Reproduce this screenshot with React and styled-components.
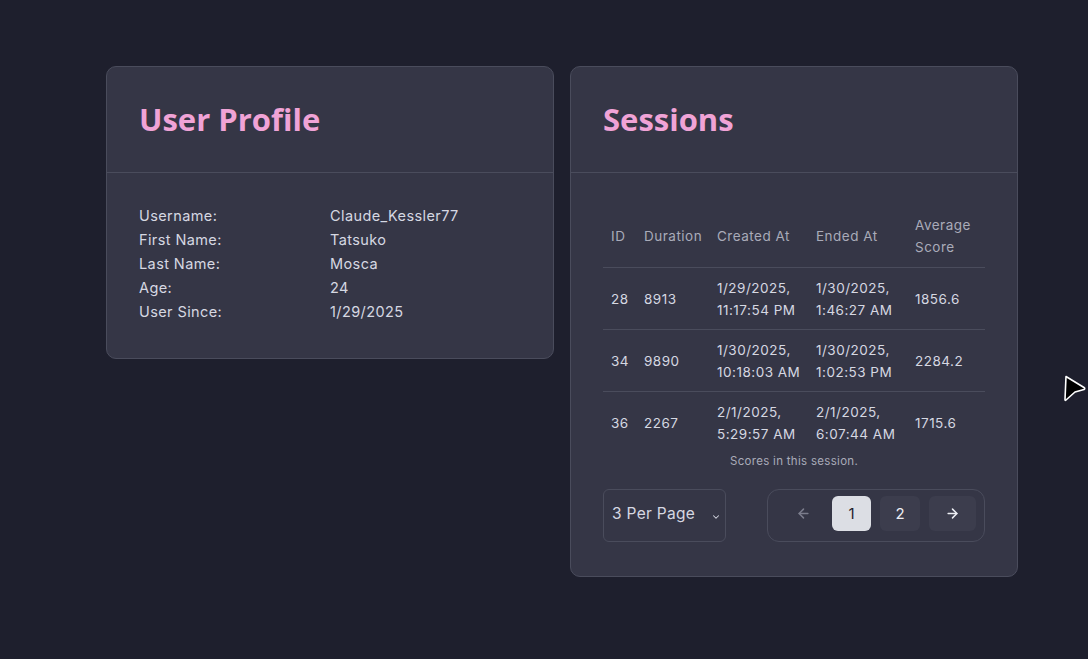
import React from "react";
import styled, { createGlobalStyle } from "styled-components";

// Palette
const pageBg = "#1e1f2d";
const cardBg = "#353646";
const lineColor = "#4a4c5c";
const pink = "#f0a3d6";
const textColor = "#d6d8e2";
const mutedText = "#a9abb9";

const GlobalStyle = createGlobalStyle`
  html, body {
    margin: 0;
    padding: 0;
    background: ${pageBg};
  }
  body {
    font-family: "Inter", "Liberation Sans", sans-serif;
    color: ${textColor};
  }
`;

const Page = styled.main`
  position: relative;
  min-height: 659px;
  box-sizing: border-box;
  padding: 66px 0 0 106px;
  display: flex;
  align-items: flex-start;
  gap: 16px;
`;

const Card = styled.section`
  width: 448px;
  box-sizing: border-box;
  background: ${cardBg};
  border: 1px solid ${lineColor};
  border-radius: 10px;
  overflow: hidden;
`;

const CardHeader = styled.header`
  height: 106px;
  box-sizing: border-box;
  padding: 33px 32px 0;
  border-bottom: 1px solid ${lineColor};
`;

const Title = styled.h2`
  margin: 0;
  font-family: "Open Sans", "Noto Sans", sans-serif;
  font-weight: 700;
  font-size: 31px;
  line-height: 38px;
  color: ${pink};
`;

const CardBody = styled.div`
  padding: ${({ $pad }) => $pad || "31px 32px 34px"};
`;

const InfoGrid = styled.dl`
  margin: 0;
  display: grid;
  grid-template-columns: 191px 1fr;
  font-size: 14.5px;
  letter-spacing: 0.4px;
  line-height: 24px;

  dt,
  dd {
    margin: 0;
    color: ${textColor};
  }
`;

const Table = styled.table`
  width: 100%;
  table-layout: fixed;
  border-collapse: collapse;
  font-size: 13.5px;
  letter-spacing: 0.5px;
  line-height: 22px;

  caption {
    caption-side: bottom;
    font-size: 11.5px;
    letter-spacing: 0.3px;
    color: ${mutedText};
    padding-top: 2px;
    line-height: 12px;
  }
`;

const Th = styled.th`
  text-align: left;
  font-weight: 400;
  color: ${mutedText};
  padding: 9px 8px;
  border-bottom: 1px solid ${lineColor};
  width: ${({ $w }) => $w || "auto"};
  vertical-align: middle;
`;

const Td = styled.td`
  padding: 9px 8px 8px;
  color: ${textColor};
  border-bottom: ${({ $last }) => ($last ? "none" : `1px solid ${lineColor}`)};
  vertical-align: middle;
  white-space: nowrap;
`;

const Controls = styled.div`
  display: flex;
  justify-content: space-between;
  align-items: center;
  margin-top: 22px;
`;

const SelectBox = styled.div`
  width: 123px;
  height: 53px;
  box-sizing: border-box;
  border: 1px solid ${lineColor};
  border-radius: 6px;
  display: flex;
  align-items: center;
  justify-content: space-between;
  padding: 0 4px 4px 8px;
  font-size: 15.5px;
  letter-spacing: 0.3px;
  color: ${textColor};
`;

const Pager = styled.nav`
  width: 218px;
  height: 53px;
  box-sizing: border-box;
  border: 1px solid ${lineColor};
  border-radius: 12px;
  display: flex;
  align-items: center;
  padding: 0 8px 0 16px;
  gap: 9px;
`;

const PageButton = styled.button`
  height: 35px;
  width: ${({ $w }) => $w || "39px"};
  border: none;
  border-radius: 6px;
  margin-top: -4px;
  display: flex;
  align-items: center;
  justify-content: center;
  font-family: inherit;
  font-size: 15px;
  padding: 0;
  background: ${({ $active, $ghost }) =>
    $active ? "#dcdee4" : $ghost ? "transparent" : "#3c3d4d"};
  color: ${({ $active, $disabled }) =>
    $active ? "#1e1f2d" : $disabled ? "#7b7d8c" : "#eceef4"};
`;

const Cursor = styled.svg`
  position: absolute;
  left: 1062px;
  top: 373px;
`;

const profile = [
  ["Username:", "Claude_Kessler77"],
  ["First Name:", "Tatsuko"],
  ["Last Name:", "Mosca"],
  ["Age:", "24"],
  ["User Since:", "1/29/2025"],
];

const sessions = [
  { id: 28, duration: 8913, created: ["1/29/2025,", "11:17:54 PM"], ended: ["1/30/2025,", "1:46:27 AM"], avg: "1856.6" },
  { id: 34, duration: 9890, created: ["1/30/2025,", "10:18:03 AM"], ended: ["1/30/2025,", "1:02:53 PM"], avg: "2284.2" },
  { id: 36, duration: 2267, created: ["2/1/2025,", "5:29:57 AM"], ended: ["2/1/2025,", "6:07:44 AM"], avg: "1715.6" },
];

const Arrow = ({ dir }) => (
  <svg width="15" height="15" viewBox="0 0 24 24" fill="none" stroke="currentColor" strokeWidth="2.4" strokeLinecap="round" strokeLinejoin="round">
    {dir === "left" ? (
      <>
        <path d="M19 12H5" />
        <path d="M12 19l-7-7 7-7" />
      </>
    ) : (
      <>
        <path d="M5 12h14" />
        <path d="M12 5l7 7-7 7" />
      </>
    )}
  </svg>
);

const App = () => {
  const lastIndex = sessions.length - 1;
  return (
    <>
      <GlobalStyle />
      <Page>
        <Card>
          <CardHeader>
            <Title>User Profile</Title>
          </CardHeader>
          <CardBody>
            <InfoGrid>
              {profile.map(([label, value]) => (
                <React.Fragment key={label}>
                  <dt>{label}</dt>
                  <dd>{value}</dd>
                </React.Fragment>
              ))}
            </InfoGrid>
          </CardBody>
        </Card>

        <Card>
          <CardHeader>
            <Title>Sessions</Title>
          </CardHeader>
          <CardBody $pad="32px 32px 34px">
            <Table>
              <caption>Scores in this session.</caption>
              <thead>
                <tr>
                  <Th $w="17px">ID</Th>
                  <Th $w="57px">Duration</Th>
                  <Th $w="83px">Created At</Th>
                  <Th $w="83px">Ended At</Th>
                  <Th>Average<br />Score</Th>
                </tr>
              </thead>
              <tbody>
                {sessions.map((s, i) => (
                  <tr key={s.id}>
                    <Td $last={i === lastIndex}>{s.id}</Td>
                    <Td $last={i === lastIndex}>{s.duration}</Td>
                    <Td $last={i === lastIndex}>{s.created[0]}<br />{s.created[1]}</Td>
                    <Td $last={i === lastIndex}>{s.ended[0]}<br />{s.ended[1]}</Td>
                    <Td $last={i === lastIndex}>{s.avg}</Td>
                  </tr>
                ))}
              </tbody>
            </Table>

            <Controls>
              <SelectBox>
                <span>3 Per Page</span>
                <svg width="10" height="10" viewBox="0 0 24 24" fill="none" stroke="currentColor" strokeWidth="2.5" strokeLinecap="round" strokeLinejoin="round" style={{ marginTop: 6 }}>
                  <path d="M6 9l6 6 6-6" />
                </svg>
              </SelectBox>
              <Pager>
                <PageButton $ghost $disabled $w="39px"><Arrow dir="left" /></PageButton>
                <PageButton $active>1</PageButton>
                <PageButton $w="40px">2</PageButton>
                <PageButton $w="47px"><Arrow dir="right" /></PageButton>
              </Pager>
            </Controls>
          </CardBody>
        </Card>

        <Cursor width="26" height="30" viewBox="0 0 26 30">
          <path d="M4 3.5 L22 14.5 Q23.5 15.5 22 16.5 L13 19 L4 27 Q3 28 3 26.5 Z" fill="#000" stroke="#fff" strokeWidth="1.6" strokeLinejoin="round" />
        </Cursor>
      </Page>
    </>
  );
};

export default App;
